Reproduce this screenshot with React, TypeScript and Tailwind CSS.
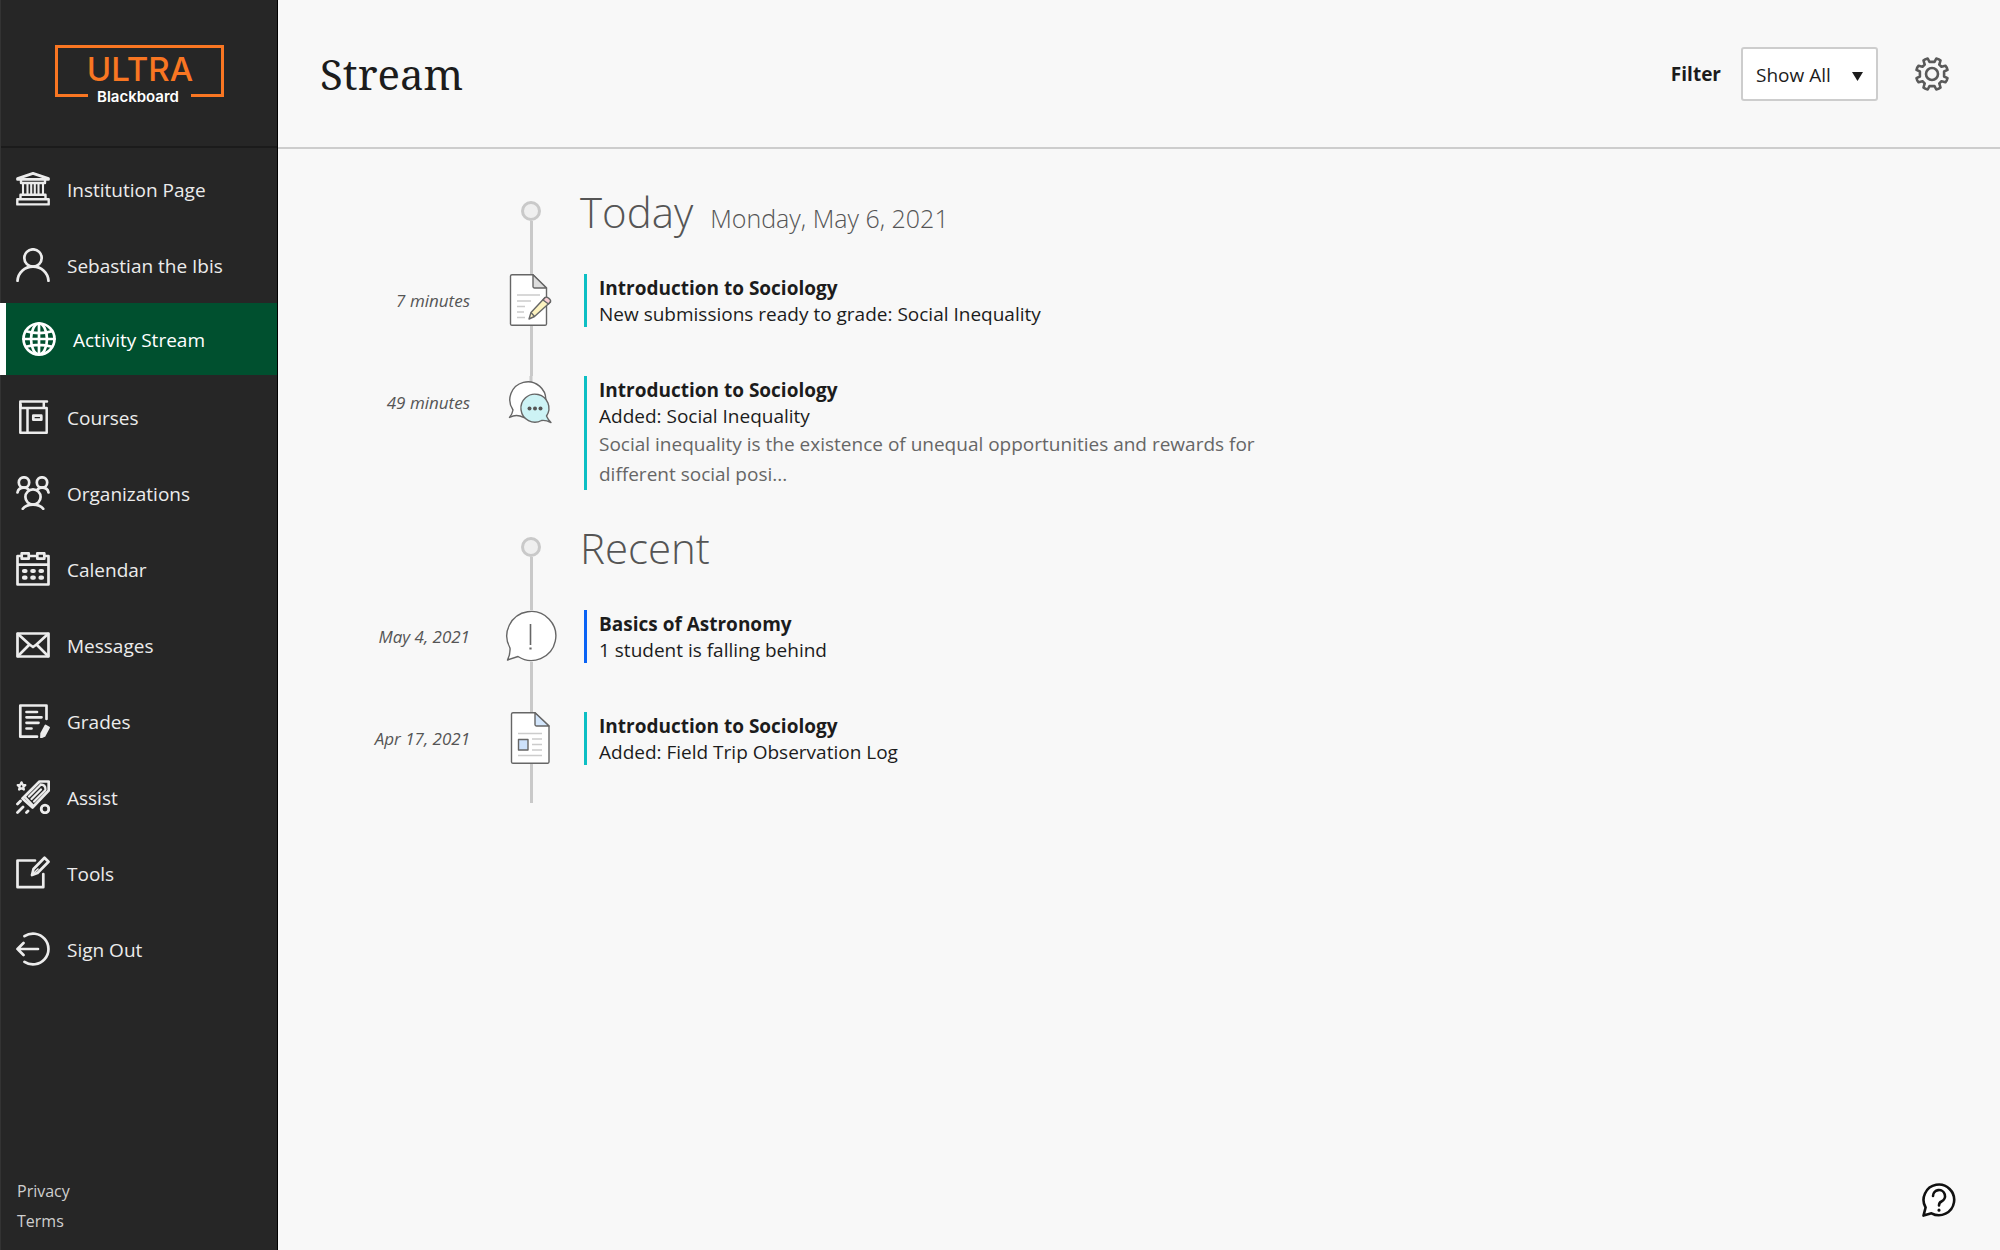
import React from 'react';
import clsx from 'clsx';

interface IconProps {
  children: React.ReactNode;
}

const NavIcon: React.FC<IconProps> = ({ children }) => (
  <svg
    className="size-[34px] shrink-0"
    viewBox="0 0 34 34"
    fill="none"
    stroke="currentColor"
    strokeWidth="2.7"
    strokeLinecap="round"
    strokeLinejoin="round"
    aria-hidden="true"
  >
    {children}
  </svg>
);

const InstitutionIcon = () => (
  <NavIcon>
    <path d="M1.5 6.6 17 1.4l15.5 5.2v.8h-31z" />
    <path d="M5 8v3h24V8M4.500 26.500v-3.700h25v3.700M1.300 27.200h31.400v5.200H1.300z" strokeWidth="2.4" />
    <path d="M7 11.500v11M11.500 11.500v11M15.200 11.500v11M18.800 11.500v11M22.500 11.500v11M27 11.500v11" strokeWidth="2.1" />
  </NavIcon>
);

const UserIcon = () => (
  <NavIcon>
    <circle cx="17" cy="10" r="8.7" />
    <path d="M1.500 32.800C2 24.500 8.500 18.700 17 18.700s15 5.800 15.500 14.100" />
  </NavIcon>
);

const GlobeIcon = () => (
  <NavIcon>
    <circle cx="17" cy="17" r="15.500" />
    <ellipse cx="17" cy="17" rx="8" ry="15.500" />
    <path d="M17 1.500v31M1.500 17h31M4 9.300c8 2.300 18 2.300 26 0M4 24.700c8-2.300 18-2.300 26 0" />
  </NavIcon>
);

const CoursesIcon = () => (
  <NavIcon>
    <path d="M31 1.500H4.300v31.200h26.400V8H4.300M27.800 2v5.500M11.500 8v24" strokeWidth="2.5" />
    <path d="M4.500 4.500v3" />
    <rect x="17.300" y="15.700" width="8" height="4" />
  </NavIcon>
);

const OrganizationsIcon = () => (
  <NavIcon>
    <circle cx="8" cy="6.500" r="5.200" />
    <circle cx="26" cy="6.500" r="5.200" />
    <path d="M1.500 16.500C2 13.500 4.500 11.700 8 11.700c2 0 3.200.6 4.200 1.500M32.500 16.500c-.5-3-3-4.800-6.500-4.800-2 0-3.200.6-4.200 1.500" />
    <circle cx="17" cy="21" r="7.600" />
    <path d="M6.800 32.800c2.300-3.200 6-4.200 10.200-4.200s7.900 1 10.200 4.200" />
  </NavIcon>
);

const CalendarIcon = () => (
  <NavIcon>
    <path d="M5 4H1.500v28.500h31V4H29M13.500 4h7M1.500 12.600h31" />
    <rect x="5.700" y="1.300" width="7" height="5.400" />
    <rect x="21.300" y="1.300" width="7" height="5.400" />
    <path d="M8 19h1.500M16.300 19h1.500M24.500 19h1.500M8 25.700h1.500M16.300 25.700h1.500M24.500 25.700h1.500" strokeWidth="4.200" />
  </NavIcon>
);

const MessagesIcon = () => (
  <NavIcon>
    <rect x="1.500" y="5.500" width="31" height="23" />
    <path d="M2 6l11.500 10.500L17 19l3.500-2.500L32 6M2 28l11.500-11.500M32 28L20.500 16.500" />
  </NavIcon>
);

const GradesIcon = () => (
  <NavIcon>
    <path d="M30.500 15V1.500H4.300v31.200H21" />
    <path d="M10.500 8h10.500M10.500 13.300h15M10.500 18.800h12M10.500 24.500h5" />
    <path d="M29.500 21.500l3.500 2-4.500 8.500-3.500 1.500.2-4z" fill="currentColor" strokeWidth="1.800" />
  </NavIcon>
);

const AssistIcon = () => (
  <NavIcon>
    <path d="M32.700 1.500v9L16.500 27.500 6.500 18.500 23.500 1.500z" />
    <path d="M24.500 4.500c3 0 5 2 5 5M9 17l8.500 9M13 16.500L24 5.500M18 21.500L29 10.500M15.500 19L25 9.500" strokeWidth="2.300" />
    <path d="M5.500 2.300l1.200 2.500 2.600.3-2 1.800.6 2.700-2.400-1.300-2.400 1.300.6-2.700-2-1.800 2.600-.3z" strokeWidth="2.200" />
    <circle cx="29" cy="29" r="3.800" strokeWidth="2.800" />
    <path d="M1.500 24l3-3M1.500 32.500L7 27M10.500 32.500l1.500-1.500" strokeWidth="2.800" />
  </NavIcon>
);

const ToolsIcon = () => (
  <NavIcon>
    <path d="M19 4.500H1.500v26.700h25.800V18" />
    <path d="M28.500 1.800l4 4L21.500 17l-5.500 2 1.500-6z" />
    <path d="M17 18l5-5" strokeWidth="1.600" />
  </NavIcon>
);

const SignOutIcon = () => (
  <NavIcon>
    <path d="M8.500 4.200A15.400 15.400 0 1 1 8.500 29.800" />
    <path d="M22 17H1.500M7.500 11l-6 6 6 6" />
  </NavIcon>
);

const GearIcon = () => (
  <svg className="size-[34px]" viewBox="0 0 34 34" fill="none" stroke="currentColor" strokeWidth="2.600" strokeLinejoin="round" aria-hidden="true">
    <circle cx="17" cy="17" r="6" />
    <path d="M14.500 4.900 L12.700 1.500 Q9.800 2.200 8.500 3.500 L9.700 7.600 L7.500 9.700 L3.600 8.700 Q1.900 10.500 1.500 12.900 L4.900 14.500 L4.900 19.500 L1.500 21.100 Q1.900 23.500 3.600 25.300 L7.500 24.300 L9.700 26.400 L8.500 30.500 Q9.800 31.800 12.700 32.500 L14.500 29.100 L19.500 29.100 L21.300 32.500 Q24.200 31.800 25.500 30.500 L24.300 26.400 L26.500 24.300 L30.400 25.300 Q32.100 23.500 32.500 21.100 L29.100 19.500 L29.100 14.500 L32.500 12.900 Q32.100 10.500 30.400 8.700 L26.500 9.700 L24.300 7.600 L25.500 3.500 Q24.200 2.200 21.300 1.500 L19.500 4.900 Z" />
  </svg>
);

const HelpIcon = () => (
  <svg className="size-[34px]" viewBox="0 0 34 34" fill="none" stroke="currentColor" strokeWidth="2.600" strokeLinecap="round" strokeLinejoin="round" aria-hidden="true">
    <path d="M3.600 24.500A15.300 15.300 0 1 1 9.500 30.300L1.500 32.600z" fill="#fff" />
    <path d="M11 13a6 6 0 1 1 8.500 5.500c-2 .9-2.500 1.700-2.500 4" />
    <path d="M17 27v.2" strokeWidth="3" />
  </svg>
);

const Logo = () => (
  <svg className="h-[70px] w-[170px]" viewBox="54 44 170 70" role="img" aria-label="Ultra Blackboard">
    <path d="M88 95.500H56.500v-49h166v49H191" fill="none" stroke="#f97622" strokeWidth="3" />
    <text x="140" y="81" textAnchor="middle" fontSize="33" fontWeight="500" fill="#f97622" className="font-['Inter',sans-serif]">
      ULTRA
    </text>
    <text x="138" y="102" textAnchor="middle" fontSize="15" fontWeight="600" fill="#fff" className="font-['Inter',sans-serif]">
      Blackboard
    </text>
  </svg>
);

const EventIcon: React.FC<IconProps> = ({ children }) => (
  <svg
    className="size-[52px] shrink-0"
    viewBox="0 0 52 52"
    fill="#fff"
    stroke="#666"
    strokeWidth="1.4"
    strokeLinejoin="round"
    aria-hidden="true"
  >
    {children}
  </svg>
);

const SubmissionIcon = () => (
  <EventIcon>
    <path d="M7 .7h21L41.500 14v36a1.500 1.500 0 0 1-1.500 1.300H7A1.500 1.500 0 0 1 5.500 50V2A1.500 1.500 0 0 1 7 .7z" />
    <path d="M28 .7V12.500A1.500 1.500 0 0 0 29.500 14h12z" fill="#ddd" />
    <path d="M12 21h23M12 27h14M12 32.500h8M12 38h7M12 43.500h8" stroke="#ccc" strokeWidth="1.400" />
    <path d="M40 23.500l5.500 4.500L29.500 42.500 24 45l2-6.500z" fill="#fdf3c0" />
    <path d="M26 38.500l3.500 4" />
    <path d="M38 26l2.200-2.500c1.500-1.500 6.500 2.500 5.300 4L43.500 30z" fill="#f8cfd4" />
  </EventIcon>
);

const DiscussionIcon = () => (
  <EventIcon>
    <path d="M26 0v8" stroke="#c9c9c9" strokeWidth="3" />
    <path d="M8 34a18 18 0 1 1 7 6c-3-1-7-.5-10.500 1.500C6.500 39 7.500 37 8 34z" />
    <path d="M41.500 40a14 14 0 1 0-5 4.500c3-.5 6.500.5 9.500 2-2-2-3.500-4-4.500-6.500z" fill="#cdf3f5" />
    <g fill="#555" stroke="none">
      <circle cx="24.500" cy="32.500" r="2" />
      <circle cx="30" cy="32.500" r="2" />
      <circle cx="35.500" cy="32.500" r="2" />
    </g>
  </EventIcon>
);

const AlertIcon = () => (
  <EventIcon>
    <path d="M5 38A24.500 24.500 0 1 1 13 46.500L2.500 50C4.500 46 5.300 42 5 38z" />
    <path d="M25.500 14v21" strokeWidth="1.600" />
    <path d="M25.500 37.500v2" strokeWidth="2.200" />
  </EventIcon>
);

const DocumentIcon = () => (
  <EventIcon>
    <path d="M8 .7h22L44 14v36a1.500 1.500 0 0 1-1.500 1.300H8A1.500 1.500 0 0 1 6.500 50V2A1.500 1.500 0 0 1 8 .7z" />
    <path d="M30 .7V12.500A1.500 1.500 0 0 0 31.500 14H44z" fill="#d3e6fc" />
    <path d="M13 21.500h24M27 27h10M27 32.500h10M27 38h10M13 43.500h24" stroke="#ccc" strokeWidth="1.400" />
    <path d="M13.500 27.500h9.500v10.500h-9.500z" fill="#cde2fc" />
  </EventIcon>
);

const navItems = [
  { label: 'Institution Page', icon: InstitutionIcon },
  { label: 'Sebastian the Ibis', icon: UserIcon },
  { label: 'Activity Stream', icon: GlobeIcon, active: true },
  { label: 'Courses', icon: CoursesIcon },
  { label: 'Organizations', icon: OrganizationsIcon },
  { label: 'Calendar', icon: CalendarIcon },
  { label: 'Messages', icon: MessagesIcon },
  { label: 'Grades', icon: GradesIcon },
  { label: 'Assist', icon: AssistIcon },
  { label: 'Tools', icon: ToolsIcon },
  { label: 'Sign Out', icon: SignOutIcon },
];

const Sidebar = () => (
  <aside className="flex w-[278px] shrink-0 flex-col border-r border-l border-r-black border-l-[#333] bg-[#262626] text-[#ececec]">
    <div className="flex h-[148px] justify-center border-b-2 border-[#1b1b1b] pt-11">
      <Logo />
    </div>
    <nav className="-ml-px pt-[3px]">
      <ul>
        {navItems.map(({ label, icon: Icon, active }) => (
          <li key={label}>
            <a
              href="#"
              aria-current={active ? 'page' : undefined}
              className={clsx(
                'flex items-center gap-[17px] pl-4 text-[19px]',
                active ? 'mb-1 h-[72px] border-l-6 border-white bg-[#00502f] text-white' : 'h-[76px]'
              )}
            >
              <Icon />
              <span className="pt-0.5">{label}</span>
            </a>
          </li>
        ))}
      </ul>
    </nav>
    <div className="mt-auto flex flex-col items-start pb-[14px] pl-4 text-[16px] leading-[30px] text-[#cfcfcf]">
      <a href="#">Privacy</a>
      <a href="#">Terms</a>
    </div>
  </aside>
);

const Header = () => (
  <header className="flex h-[149px] items-center border-b-2 border-[#cdcdcd] pr-[51px] pl-[42px]">
    <h1 className="font-['Noto_Serif','Liberation_Serif',serif] text-[42px] leading-[60px] text-[#1c1c1c]">Stream</h1>
    <label htmlFor="filter" className="ml-auto pt-0.5 text-[19px] font-bold">
      Filter
    </label>
    <div className="relative ml-5">
      <select
        id="filter"
        className="h-[54px] w-[137px] appearance-none rounded-[3px] border-2 border-[#cdcdcd] bg-white pt-1 pl-[13px] text-[19px]"
      >
        <option>Show All</option>
      </select>
      <svg className="pointer-events-none absolute top-[25px] right-[15px] h-[9px] w-[11px]" viewBox="0 0 11 9" aria-hidden="true">
        <path d="M0 0h11L5.500 9z" fill="#1c1c1c" />
      </svg>
    </div>
    <button type="button" aria-label="Stream settings" className="ml-[37px] text-[#5a5a5a]">
      <GearIcon />
    </button>
  </header>
);

interface StreamItem {
  time: string;
  icon: React.FC;
  accent: string;
  course: string;
  text: string;
  detail?: string;
}

interface StreamSectionProps {
  title: string;
  date?: string;
  items: StreamItem[];
  tail?: boolean;
}

const rowGrid = 'grid grid-cols-[200px_106px_minmax(0,1fr)]';

const StreamSection: React.FC<StreamSectionProps> = ({ title, date, items, tail = false }) => (
  <section>
    <div className={rowGrid}>
      <div />
      <div className="flex flex-col items-center pt-[17px]">
        <span className="size-5 rounded-full border-3 border-[#c9c9c9] bg-[#efefef]" />
        <span className="w-[3px] flex-1 bg-[#c9c9c9]" />
      </div>
      <div className="-ml-1 flex items-baseline gap-[17px] pb-[34px] font-light text-[#555]">
        <h2 className="text-[42px] leading-[56px]">{title}</h2>
        {date && <span className="text-[25px]">{date}</span>}
      </div>
    </div>
    {items.map((item, index) => {
      const last = index === items.length - 1;
      const Icon = item.icon;
      return (
        <article key={item.time} className={rowGrid}>
          <time className="pr-2 text-right text-[17px] leading-[54px] text-[#555] italic">{item.time}</time>
          <div className="flex flex-col items-center">
            <Icon />
            {(!last || tail) && <span className="w-[3px] flex-1 bg-[#c9c9c9]" />}
          </div>
          <div className={clsx(!last && 'pb-[49px]', last && tail && 'pb-[38px]')}>
            <div className={clsx('border-l-3 pt-px pl-3 text-[19px] leading-[26px]', item.accent)}>
              <h3 className="font-bold">{item.course}</h3>
              <p>{item.text}</p>
              {item.detail && <p className="max-w-[690px] pb-px leading-[30px] text-[#666]">{item.detail}</p>}
            </div>
          </div>
        </article>
      );
    })}
  </section>
);

const today: StreamItem[] = [
  {
    time: '7 minutes',
    icon: SubmissionIcon,
    accent: 'border-[#0dbfc4]',
    course: 'Introduction to Sociology',
    text: 'New submissions ready to grade: Social Inequality',
  },
  {
    time: '49 minutes',
    icon: DiscussionIcon,
    accent: 'border-[#0dbfc4]',
    course: 'Introduction to Sociology',
    text: 'Added: Social Inequality',
    detail: 'Social inequality is the existence of unequal opportunities and rewards for different social posi...',
  },
];

const recent: StreamItem[] = [
  {
    time: 'May 4, 2021',
    icon: AlertIcon,
    accent: 'border-[#0a63f5]',
    course: 'Basics of Astronomy',
    text: '1 student is falling behind',
  },
  {
    time: 'Apr 17, 2021',
    icon: DocumentIcon,
    accent: 'border-[#0dbfc4]',
    course: 'Introduction to Sociology',
    text: 'Added: Field Trip Observation Log',
  },
];

export default function App() {
  return (
    <div className="flex min-h-screen bg-[#f8f8f8] font-['Open_Sans',sans-serif] text-[#1c1c1c]">
      <Sidebar />
      <div className="flex min-w-0 flex-1 flex-col">
        <Header />
        <main className="flex flex-col gap-[30px] pt-[35px]">
          <StreamSection title="Today" date="Monday, May 6, 2021" items={today} />
          <StreamSection title="Recent" items={recent} tail />
        </main>
        <footer className="mt-auto flex justify-end pr-11 pb-[33px]">
          <button type="button" aria-label="Help" className="text-[#111]">
            <HelpIcon />
          </button>
        </footer>
      </div>
    </div>
  );
}
